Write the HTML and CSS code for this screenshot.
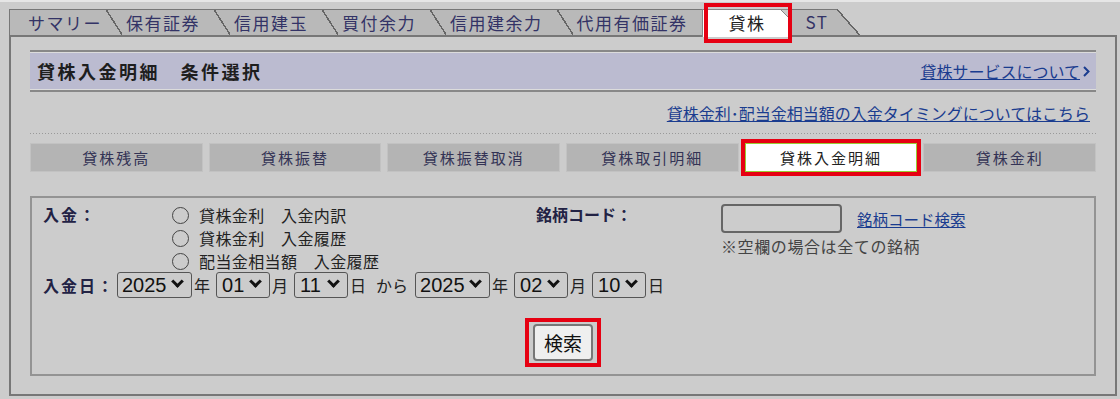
FILE: index.html
```html
<!DOCTYPE html>
<html lang="ja">
<head>
    <meta charset="UTF-8">
    <title>貸株入金明細 条件選択</title>
    <link rel="stylesheet" href="styles.css">
</head>
<body>
<div id="wrap">
    <ul class="tabs">
        <li class="tab tab-first">サマリー</li>
        <li class="tab">保有証券</li>
        <li class="tab">信用建玉</li>
        <li class="tab">買付余力</li>
        <li class="tab">信用建余力</li>
        <li class="tab">代用有価証券</li>
        <li class="tab tab-on">貸株</li>
        <li class="tab tab-last">ST</li>
    </ul>

    <div class="panel">
        <div class="head">
            <h1>貸株入金明細　条件選択</h1>
            <span class="head-link">
                <a href="#">貸株サービスについて</a>
                <svg class="chev" width="7" height="11" viewBox="0 0 7 11"><polyline points="1,1 5.5,5.5 1,10" fill="none" stroke="#1a3c8f" stroke-width="2"/></svg>
            </span>
        </div>
        <p class="info"><a href="#">貸株金利･配当金相当額の入金タイミングについてはこちら</a></p>

        <ul class="subnav">
            <li>貸株残高</li>
            <li>貸株振替</li>
            <li>貸株振替取消</li>
            <li>貸株取引明細</li>
            <li class="on">貸株入金明細</li>
            <li>貸株金利</li>
        </ul>

        <form class="cond">
            <div class="row1">
                <div class="label lbl-kind">入金：</div>
                <div class="radios">
                    <label><input type="radio" name="kind">貸株金利　入金内訳</label>
                    <label><input type="radio" name="kind">貸株金利　入金履歴</label>
                    <label><input type="radio" name="kind">配当金相当額　入金履歴</label>
                </div>
                <div class="label lbl-code">銘柄コード：</div>
                <div class="code">
                    <div class="code-line">
                        <input type="text" class="code-input">
                        <a href="#" class="code-search">銘柄コード検索</a>
                    </div>
                    <div class="code-note">※空欄の場合は全ての銘柄</div>
                </div>
            </div>

            <div class="row2">
                <div class="label lbl-date">入金日：</div>
                <span class="sel sel-y"><select><option>2025</option></select></span><span class="unit">年</span>
                <span class="sel"><select><option>01</option></select></span><span class="unit">月</span>
                <span class="sel"><select><option>11</option></select></span><span class="unit">日</span>
                <span class="from">から</span>
                <span class="sel sel-y"><select><option>2025</option></select></span><span class="unit">年</span>
                <span class="sel"><select><option>02</option></select></span><span class="unit">月</span>
                <span class="sel"><select><option>10</option></select></span><span class="unit">日</span>
            </div>

            <div class="btn-row">
                <span class="mark-box"><button type="button" class="btn">検索</button></span>
            </div>
        </form>
    </div>
</div>
</body>
</html>
```

FILE: styles.css
```css
*{
    margin: 0;
    padding: 0;
}

body{
    background: #cccccc;
    border-top: 2px solid #e6e6e6;
    font-family: "Noto Sans CJK JP", sans-serif;
    font-size: 16px;
    color: #222;
}

a{
    color: #1a3c8f;
}

#wrap{
    margin: 0 3px 0 9px;
}

/* tabs */
.tabs{
    display: flex;
    align-items: flex-start;
    list-style: none;
    height: 26px;
    margin-top: 7px;
    position: relative;
    z-index: 1;
}

.tab{
    box-sizing: border-box;
    height: 26px;
    line-height: 25px;
    padding: 0 14px 0 20px;
    font-size: 17px;
    letter-spacing: 1.5px;
    color: #333366;
    white-space: nowrap;
    border-top: 1px solid #777;
    background:
        linear-gradient(to bottom left, transparent calc(50% - 1px), #666 calc(50% - 1px), #666 calc(50% + .5px), transparent calc(50% + .5px)) left top / 16px 100% no-repeat,
        #b9b9b9;
}

.tab-first{
    border-left: 1px solid #777;
    padding: 0 4px 0 18px;
    background: #b9b9b9;
}

.tab-on{
    position: relative;
    height: 28px;
    padding: 0 24px 0 26px;
    color: #222;
    border-left: 1px solid #888;
    border-top-color: #888;
    background:
        linear-gradient(to bottom left, #ccc calc(50% - .5px), #888 calc(50% - .5px), #888 calc(50% + .5px), #fff calc(50% + .5px)) right top / 9px 9px no-repeat,
        #fff;
}

/* annotation frame */
.tab-on::after{
    content: '';
    position: absolute;
    left: 1px;
    right: -2px;
    top: -7px;
    bottom: -6px;
    border: 4px solid #e60012;
}

.tab-last{
    border-top: none;
    padding: 0 32px 0 16px;
    line-height: 26px;
    background:
        linear-gradient(#777, #777) left top / calc(100% - 23px) 1px no-repeat,
        linear-gradient(to bottom left, transparent calc(50% - .5px), #666 calc(50% - .5px), #666 calc(50% + 1px), #b9b9b9 calc(50% + 1px)) right top / 23px 100% no-repeat,
        linear-gradient(#b9b9b9, #b9b9b9) left top / calc(100% - 23px) 100% no-repeat;
}

/* panel */
.panel{
    border: 2px solid #777;
    padding: 13px 19px 18px;
}

.head{
    display: flex;
    align-items: center;
    justify-content: space-between;
    box-sizing: border-box;
    height: 42px;
    border-top: 2px solid #888;
    border-bottom: 2px solid #888;
    box-shadow: inset 0 1px #dcdcdc, inset 0 -1px #dcdcdc;
    background: #bbbbd0;
    padding: 0 6px 0 7px;
}

.head h1{
    font-size: 18px;
    letter-spacing: 2.5px;
    color: #1e1e1e;
}

.head-link{
    display: flex;
    align-items: center;
    gap: 3px;
    font-size: 16px;
}

.info{
    padding: 11px 6px 11px;
    line-height: 20px;
    text-align: right;
    font-size: 16px;
    background: linear-gradient(to right, #999 1px, transparent 1px) left bottom / 3px 1px repeat-x;
}

.subnav{
    display: flex;
    gap: 6px;
    list-style: none;
    margin-top: 9px;
}

.subnav li{
    flex: 1;
    box-sizing: border-box;
    height: 29px;
    line-height: 27px;
    text-align: center;
    font-size: 15px;
    letter-spacing: 2px;
    color: #333355;
    background: #b4b4b4;
    border: 1px solid #c2c2c2;
}

.subnav li.on{
    background: #fff;
    border-color: #99cc33;
    color: #222;
    outline: 4px solid #e60012;
}

/* search form */
.cond{
    margin-top: 24px;
    border: 2px solid #939393;
    padding: 5px 11px 7px;
}

.label{
    font-weight: bold;
    color: #222244;
    letter-spacing: 2px;
    line-height: 23px;
}

.row1{
    display: flex;
    align-items: flex-start;
}

.lbl-kind{
    width: 129px;
}

.radios{
    width: 364px;
}

.radios label{
    display: flex;
    align-items: center;
    height: 23px;
    letter-spacing: .4px;
}

.radios input{
    appearance: none;
    width: 17px;
    height: 17px;
    margin: 2px 10px 0 0;
    border: 1.5px solid #444;
    border-radius: 50%;
    background: transparent;
}

.lbl-code{
    width: 185px;
    letter-spacing: 0;
}

.code-line{
    display: flex;
    align-items: center;
    margin-top: 1px;
}

.code-input{
    box-sizing: border-box;
    width: 121px;
    height: 29px;
    border: 2px solid #666;
    border-radius: 4px;
    background: transparent;
}

.code-search{
    margin-left: 15px;
    font-size: 15.5px;
}

.code-note{
    margin-top: 3px;
    line-height: 20px;
    color: #444;
    letter-spacing: .6px;
}

.row2{
    display: flex;
    align-items: center;
    height: 26px;
}

.lbl-date{
    width: 74px;
    line-height: 26px;
}

.sel{
    position: relative;
    display: inline-block;
    height: 26px;
}

.sel select{
    appearance: none;
    box-sizing: border-box;
    width: 54px;
    height: 26px;
    padding: 0 0 0 5px;
    border: 1.5px solid #555;
    border-radius: 3px;
    background: transparent;
    font-family: "Liberation Sans", sans-serif;
    font-size: 20px;
    color: #111;
}

.sel-y select{
    width: 75px;
    padding-left: 4px;
}

.sel::after{
    content: '';
    position: absolute;
    right: 10px;
    top: 5px;
    width: 6px;
    height: 6px;
    border-right: 3px solid #111;
    border-bottom: 3px solid #111;
    transform: rotate(45deg);
    pointer-events: none;
}

.unit{
    margin: 0 6px 0 2px;
    line-height: 26px;
}

.from{
    margin: 0 7px 0 4px;
}

.btn-row{
    margin-top: 20px;
    text-align: center;
}

.mark-box{
    display: inline-flex;
    border: 4px solid #e60012;
    padding: 2px 4px;
}

.btn{
    box-sizing: border-box;
    width: 60px;
    height: 37px;
    border: 2px solid #777;
    border-radius: 4px;
    background: #efefef;
    font-family: "Noto Sans CJK JP", sans-serif;
    font-size: 19px;
    color: #111;
}
```
